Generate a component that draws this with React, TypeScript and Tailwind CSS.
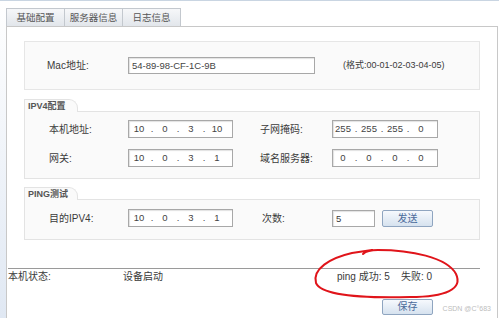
import React from 'react';

const font = "font-['Liberation_Sans','Noto_Sans_CJK_SC',sans-serif]";

const IpInput: React.FC<{ parts: string[]; width: string }> = ({ parts, width }) => (
  <div className={`${width} h-[18px] flex items-center border border-[#a8a8a8] bg-white shadow-[inset_1px_1px_1px_rgba(0,0,0,0.12)] text-[9.5px] text-[#444]`}>
    {parts.map((p, i) => (
      <React.Fragment key={i}>
        {i > 0 && <span className="w-[6px] text-center">.</span>}
        <span className="w-[20px] text-center">{p}</span>
      </React.Fragment>
    ))}
  </div>
);

const Legend: React.FC<{ label: string }> = ({ label }) => (
  <div className="w-[54px] h-[13px] -mb-px relative z-10 border-t border-l border-r border-[#e3e3e3] rounded-tr-[9px] bg-[#fafafa] pl-[3px] text-[9px] leading-[12px] text-[#555] font-bold">
    {label}
  </div>
);

const Tab: React.FC<{ label: string; first?: boolean }> = ({ label, first }) => (
  <div
    className={`w-[59px] h-[18px] border border-b-0 border-[#c3c8ce] bg-gradient-to-b from-[#f6f7f9] to-[#e2e6eb] text-center text-[9.5px] leading-[17px] text-[#555] ${first ? '' : '-ml-px'}`}
  >
    {label}
  </div>
);

const Button: React.FC<{ label: string; className?: string }> = ({ label, className = '' }) => (
  <div className={`w-[51px] h-[16px] border border-[#8fa5c0] rounded-[2px] bg-gradient-to-b from-[#f6f9fd] to-[#d6e2ef] text-center text-[10px] leading-[14px] text-[#4b6b9b] ${className}`}>
    {label}
  </div>
);

export default function App() {
  return (
    <div className={`relative w-[499px] h-[318px] overflow-hidden bg-white border-t border-[#c9d5e2] text-[10px] text-[#3a3a3a] ${font}`}>
      <div className="flex h-full">
        {/* left strip */}
        <div className="w-[6px] bg-gradient-to-b from-white to-[#e0e8f3]" />

        <div className="flex-1 flex flex-col pt-[7px] mr-[1px]">
          {/* tabs */}
          <div className="flex h-[18px]">
            <Tab label="基础配置" first />
            <Tab label="服务器信息" />
            <Tab label="日志信息" />
          </div>

          {/* panel */}
          <div className="flex-1 border-t border-l border-r border-[#c8c8c8] bg-white">
            {/* mac */}
            <div className="ml-[17px] mt-[14px] w-[456px] h-[49px] border border-[#e6e6e6] bg-[#fafafa] flex items-center">
              <span className="pl-[22px] w-[103px]">Mac地址:</span>
              <div className="w-[187px] h-[17px] border border-[#a8a8a8] bg-white shadow-[inset_1px_1px_1px_rgba(0,0,0,0.12)] pl-[3px] text-[9.5px] leading-[15px] text-[#444]">
                54-89-98-CF-1C-9B
              </div>
              <span className="ml-[28px] text-[9px]">(格式:00-01-02-03-04-05)</span>
            </div>

            {/* ipv4 */}
            <div className="ml-[17px] mt-[9px] w-[456px]">
              <Legend label="IPV4配置" />
              <div className="h-[68px] border border-[#e3e3e3] bg-[#fafafa] pt-[8px] pl-[24px] flex flex-col gap-[11px]">
                <div className="flex items-center">
                  <span className="w-[79px]">本机地址:</span>
                  <IpInput width="w-[105px]" parts={['10', '0', '3', '10']} />
                  <span className="ml-[27px] w-[72px]">子网掩码:</span>
                  <IpInput width="w-[106px]" parts={['255', '255', '255', '0']} />
                </div>
                <div className="flex items-center">
                  <span className="w-[79px]">网关:</span>
                  <IpInput width="w-[105px]" parts={['10', '0', '3', '1']} />
                  <span className="ml-[27px] w-[72px]">域名服务器:</span>
                  <IpInput width="w-[106px]" parts={['0', '0', '0', '0']} />
                </div>
              </div>
            </div>

            {/* ping */}
            <div className="ml-[17px] mt-[8px] w-[456px]">
              <Legend label="PING测试" />
              <div className="h-[41px] border border-[#e3e3e3] bg-[#fafafa] pt-[9px] pl-[24px]">
                <div className="flex items-center">
                  <span className="w-[79px]">目的IPV4:</span>
                  <IpInput width="w-[105px]" parts={['10', '0', '3', '1']} />
                  <span className="ml-[29px] w-[70px]">次数:</span>
                  <div className="w-[43px] h-[17px] border border-[#a8a8a8] bg-white shadow-[inset_1px_1px_1px_rgba(0,0,0,0.12)] pl-[3px] text-[9.5px] leading-[15px]">
                    5
                  </div>
                  <Button label="发送" className="ml-[7px] h-[17px] leading-[15px]" />
                </div>
              </div>
            </div>

            {/* status */}
            <div className="mt-[28px] ml-[1px] w-[472px] border-t border-[#9a9a9a]" />
            <div className="flex h-[14px] pt-[1px] pl-[1px] leading-[14px]">
              <span className="w-[115px]">本机状态:</span>
              <span className="w-[214px]">设备启动</span>
              <span>ping 成功:&nbsp;5&nbsp;&nbsp;&nbsp;&nbsp;失败:&nbsp;0</span>
            </div>
            <div className="mt-[16px] flex">
              <Button label="保存" className="ml-[375px] h-[15px] leading-[13px]" />
            </div>
          </div>
        </div>
      </div>

      {/* hand-drawn red circle */}
      <svg className="absolute inset-0 pointer-events-none" width="499" height="318" viewBox="0 0 499 318">
        <path
          d="M 363 253 C 366 250, 372 249, 378 249 C 410 249, 447 256, 456 273 C 463 288, 446 296, 410 296 C 370 297, 322 296, 316 282 C 312 268, 330 257, 352 252 L 372 249"
          fill="none"
          stroke="#e0141a"
          strokeWidth="2"
          strokeLinecap="round"
        />
      </svg>

      <span className="absolute right-[8px] bottom-[4px] text-[7px] text-[#bdbdbd]">CSDN @C°683</span>
    </div>
  );
}
